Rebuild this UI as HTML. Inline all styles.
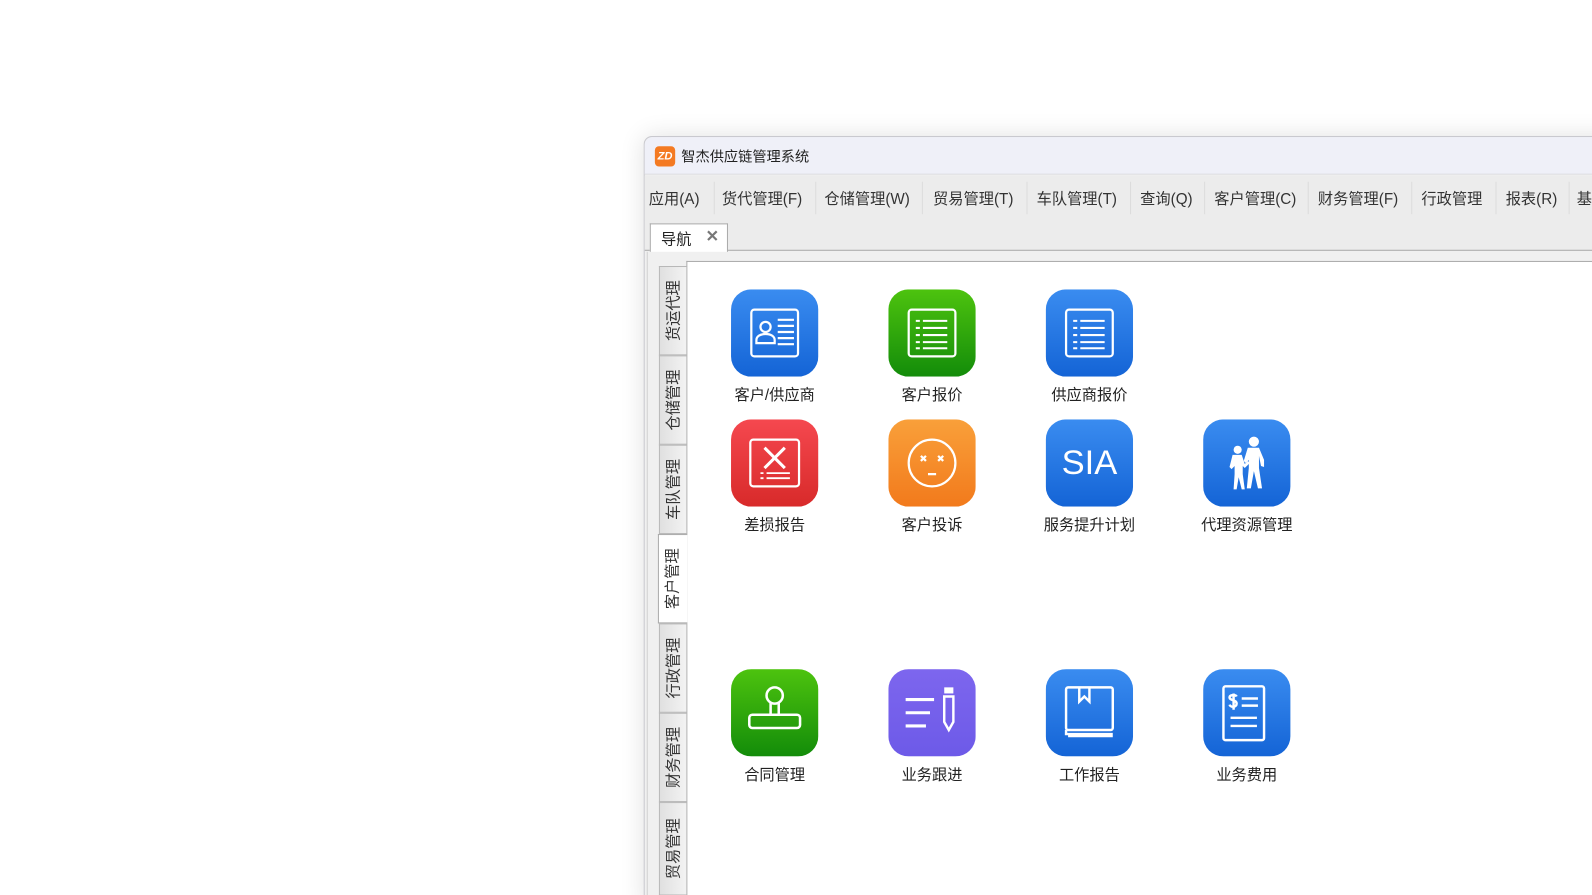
<!DOCTYPE html>
<html style="overflow:hidden;width:1592px;height:895px"><head><meta charset="utf-8"><style>
*{margin:0;padding:0;box-sizing:border-box}
body{width:1592px;height:895px;background:#fff;overflow:hidden;position:relative;font-family:"Liberation Sans","Noto Sans CJK SC",sans-serif;color:#222}
#wrap{position:absolute;left:0;top:0;width:1568px;height:882px;overflow:hidden;transform:scale(1.0153);transform-origin:0 0}
#win{position:absolute;left:634px;top:134px;width:1000px;height:760px;background:#f0f0f0;border:1px solid #c9c9cf;border-radius:8px 0 0 0;box-shadow:0 0 24px rgba(0,0,0,.12)}
#title{position:absolute;left:0;top:0;right:0;height:37px;background:#eff0f8;border-radius:8px 0 0 0;border-bottom:1px solid #d8d8de}
#title .logo{position:absolute;left:10px;top:9px;width:20px;height:20px;background:#f47a22;border-radius:4px;color:#fff;font-size:11px;font-weight:bold;line-height:20px;text-align:center;font-style:italic}
#title .t{position:absolute;left:36px;top:9px;font-size:14px;color:#222}
#menu{position:absolute;left:0;top:38px;right:0;height:44px;background:#ececec}
#menu span{position:absolute;top:12px;font-size:15px;color:#333;white-space:nowrap}
#menu i{position:absolute;top:6px;width:1px;height:32px;background:#dcdcdc}
#tabs{position:absolute;left:0;top:82px;right:0;height:30px;background:#ececec;border-bottom:1px solid #aaa}
#navtab{position:absolute;left:5px;top:3px;width:77px;height:29px;background:#fff;border:1px solid #aaa;border-bottom:none;font-size:15px}
#navtab b{position:absolute;left:10px;top:4px;font-weight:normal}
#navtab s{position:absolute;left:54px;top:2px;text-decoration:none;color:#777;font-weight:bold;font-size:16px}
#body{position:absolute;left:2px;top:113px;right:0;bottom:0;background:#f0f0f0;border-left:1px solid #d0d0d0}
#content{position:absolute;left:676px;top:257px;width:900px;height:640px;background:#fff;border-top:1px solid #aaa;border-left:1px solid #aaa}
.vt{position:absolute;left:649px;width:27px;height:88px;background:linear-gradient(90deg,#e0e0e0,#f3f3f3);border:1px solid #b8b8b8;border-right:none}
.vt span{position:absolute;left:3px;top:50%;transform:translateY(-50%) rotate(-90deg);transform-origin:center;font-size:15px;color:#333;white-space:nowrap;width:20px;text-align:center;display:flex;justify-content:center}
.vt span em{font-style:normal;display:block;white-space:nowrap}
.vt.act{background:#fff;left:648px;width:29px;border-color:#aaa;z-index:2}
.ic{position:absolute;width:86px;height:86px}
.lb{position:absolute;width:140px;text-align:center;font-size:15px;color:#222}
</style></head><body><div id="wrap">
<div id="win">
 <div id="title"><div class="logo">ZD</div><div class="t">智杰供应链管理系统</div></div>
 <div id="menu">
  <span style="left:4px">应用(A)</span><i style="left:68px"></i>
  <span style="left:76px">货代管理(F)</span><i style="left:168px"></i>
  <span style="left:177px">仓储管理(W)</span><i style="left:273px"></i>
  <span style="left:284px">贸易管理(T)</span><i style="left:376px"></i>
  <span style="left:386px">车队管理(T)</span><i style="left:478px"></i>
  <span style="left:488px">查询(Q)</span><i style="left:551px"></i>
  <span style="left:561px">客户管理(C)</span><i style="left:653px"></i>
  <span style="left:663px">财务管理(F)</span><i style="left:755px"></i>
  <span style="left:765px">行政管理</span><i style="left:838px"></i>
  <span style="left:848px">报表(R)</span><i style="left:910px"></i>
  <span style="left:918px">基础</span>
 </div>
 <div id="tabs"><div id="navtab"><b>导航</b><s>✕</s></div></div>
 <div id="body"></div>
</div>
<div id="content"></div>

<div class="vt" style="top:262px"><span><em>货运代理</em></span></div>
<div class="vt" style="top:350px"><span><em>仓储管理</em></span></div>
<div class="vt" style="top:438px"><span><em>车队管理</em></span></div>
<div class="vt act" style="top:526px"><span><em>客户管理</em></span></div>
<div class="vt" style="top:614px"><span><em>行政管理</em></span></div>
<div class="vt" style="top:702px"><span><em>财务管理</em></span></div>
<div class="vt" style="top:790px;height:92px"><span><em>贸易管理</em></span></div>

<svg width="0" height="0" style="position:absolute"><defs>
<linearGradient id="gb" x1="0" y1="0" x2="0" y2="1"><stop offset="0" stop-color="#3a8cf0"/><stop offset="1" stop-color="#1464d6"/></linearGradient>
<linearGradient id="gg" x1="0" y1="0" x2="0" y2="1"><stop offset="0" stop-color="#4dc30e"/><stop offset="1" stop-color="#138c0a"/></linearGradient>
<linearGradient id="gr" x1="0" y1="0" x2="0" y2="1"><stop offset="0" stop-color="#f5484f"/><stop offset="1" stop-color="#d82a2a"/></linearGradient>
<linearGradient id="go" x1="0" y1="0" x2="0" y2="1"><stop offset="0" stop-color="#f9a03a"/><stop offset="1" stop-color="#f27a1c"/></linearGradient>
<linearGradient id="gp" x1="0" y1="0" x2="0" y2="1"><stop offset="0" stop-color="#7d66ee"/><stop offset="1" stop-color="#6d5ae8"/></linearGradient>
</defs></svg>

<svg class="ic" style="left:720px;top:285px" viewBox="0 0 86 86"><rect width="86" height="86" rx="20" fill="url(#gb)"/><g fill="none" stroke="#fff" stroke-width="2.2"><rect x="20" y="20" width="46" height="46" rx="3"/><circle cx="34" cy="37" r="5"/><path d="M25 53v-3c0-4 4-6 9-6s9 2 9 6v3z"/><path d="M46 30h16M46 36h16M46 42h16M46 48h16M46 54h16"/></g></svg>
<svg class="ic" style="left:875px;top:285px" viewBox="0 0 86 86"><rect width="86" height="86" rx="20" fill="url(#gg)"/><g fill="none" stroke="#fff" stroke-width="2.2"><rect x="20" y="20" width="46" height="46" rx="3"/><path d="M27 31h4M34 31h24M27 38h4M34 38h24M27 45h4M34 45h24M27 52h4M34 52h24M27 58h4M34 58h24" stroke-width="2"/></g></svg>
<svg class="ic" style="left:1030px;top:285px" viewBox="0 0 86 86"><rect width="86" height="86" rx="20" fill="url(#gb)"/><g fill="none" stroke="#fff" stroke-width="2.2"><rect x="20" y="20" width="46" height="46" rx="3"/><path d="M27 31h4M34 31h24M27 38h4M34 38h24M27 45h4M34 45h24M27 52h4M34 52h24M27 58h4M34 58h24" stroke-width="2"/></g></svg>
<div class="lb" style="left:693px;top:378px">客户/供应商</div>
<div class="lb" style="left:848px;top:378px">客户报价</div>
<div class="lb" style="left:1003px;top:378px">供应商报价</div>

<svg class="ic" style="left:720px;top:413px" viewBox="0 0 86 86"><rect width="86" height="86" rx="20" fill="url(#gr)"/><g fill="none" stroke="#fff" stroke-width="2.2"><rect x="19" y="20" width="48" height="46" rx="3"/><path d="M33 28l20 20M53 28l-20 20" stroke-width="3"/><path d="M29 53h3M35 53h23M29 58h3M35 58h23" stroke-width="1.8"/></g></svg>
<svg class="ic" style="left:875px;top:413px" viewBox="0 0 86 86"><rect width="86" height="86" rx="20" fill="url(#go)"/><g fill="none" stroke="#fff" stroke-width="2.2"><circle cx="43" cy="43" r="23"/><path d="M32 36l5 5M37 36l-5 5M49 36l5 5M54 36l-5 5M39 54h8"/></g></svg>
<svg class="ic" style="left:1030px;top:413px" viewBox="0 0 86 86"><rect width="86" height="86" rx="20" fill="url(#gb)"/><text x="43" y="54" text-anchor="middle" font-family="Liberation Sans,sans-serif" font-size="34" fill="#fff">SIA</text></svg>
<svg class="ic" style="left:1185px;top:413px" viewBox="0 0 86 86"><rect width="86" height="86" rx="20" fill="url(#gb)"/><g fill="#fff"><circle cx="34" cy="30" r="4"/><path d="M29 35h9l3 9 3-3 2 2-5 5-2-2v8l2 15h-3l-3-12-2 12h-3l1-15v-8l-3 3-2-2z"/><circle cx="50" cy="22" r="5"/><path d="M44 28h11l5 12v7l-3-1-2-10v12l3 20h-4l-4-17-3 17h-4l2-20v-8l-3 3-2-2z"/></g></svg>
<div class="lb" style="left:693px;top:506px">差损报告</div>
<div class="lb" style="left:848px;top:506px">客户投诉</div>
<div class="lb" style="left:1003px;top:506px">服务提升计划</div>
<div class="lb" style="left:1158px;top:506px">代理资源管理</div>

<svg class="ic" style="left:720px;top:659px" viewBox="0 0 86 86"><rect width="86" height="86" rx="20" fill="url(#gg)"/><g fill="none" stroke="#fff" stroke-width="2.5"><circle cx="43" cy="26" r="8"/><path d="M39 33v12M47 33v12"/><rect x="18" y="45" width="50" height="13" rx="3"/></g></svg>
<svg class="ic" style="left:875px;top:659px" viewBox="0 0 86 86"><rect width="86" height="86" rx="20" fill="url(#gp)"/><g fill="none" stroke="#fff" stroke-width="3"><path d="M17 30h28M17 43h24M17 56h20"/></g><g fill="#fff"><rect x="55" y="18" width="9" height="6"/><path d="M55 27h9v25l-4.5 8-4.5-8z" fill="none" stroke="#fff" stroke-width="2.4"/></g></svg>
<svg class="ic" style="left:1030px;top:659px" viewBox="0 0 86 86"><rect width="86" height="86" rx="20" fill="url(#gb)"/><g fill="none" stroke="#fff" stroke-width="2.4"><rect x="20" y="18" width="46" height="42" rx="2"/><path d="M20 60v4h46M22 66h44"/><path d="M33 18v14l5-5 5 5v-14"/></g></svg>
<svg class="ic" style="left:1185px;top:659px" viewBox="0 0 86 86"><rect width="86" height="86" rx="20" fill="url(#gb)"/><g fill="none" stroke="#fff" stroke-width="2.4"><rect x="20" y="17" width="40" height="53" rx="2"/><path d="M33 27c-1-2-7-2-7 1s7 2 7 6-6 4-7 1M30 24v16M38 29h16M38 36h16M27 48h26M27 56h26"/></g></svg>
<div class="lb" style="left:693px;top:752px">合同管理</div>
<div class="lb" style="left:848px;top:752px">业务跟进</div>
<div class="lb" style="left:1003px;top:752px">工作报告</div>
<div class="lb" style="left:1158px;top:752px">业务费用</div>
</div></body></html>
